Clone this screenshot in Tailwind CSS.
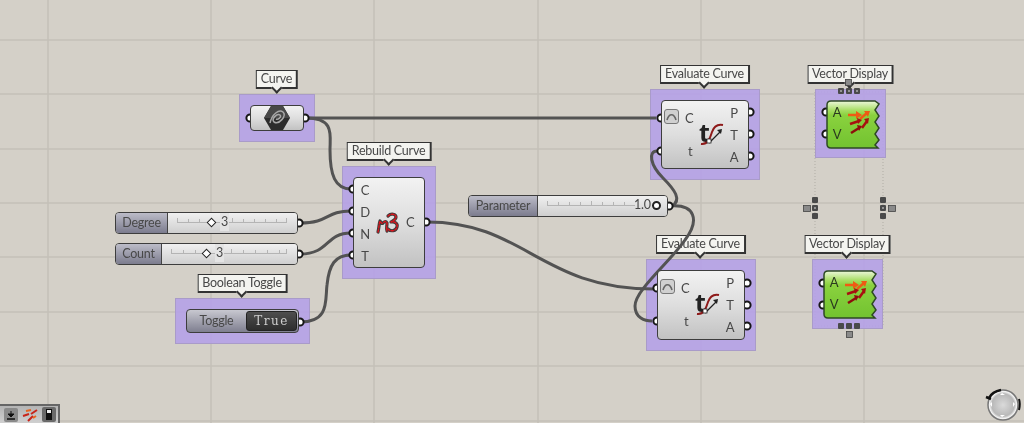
<!doctype html>
<html>

<head>
    <meta charset="UTF-8">
    <meta name="viewport" content="width=device-width, initial-scale=1.0">
    <script src="https://cdn.jsdelivr.net/npm/@tailwindcss/browser@4"></script>
</head>

<body>
    <div class="relative w-[1024px] h-[423px] overflow-hidden bg-[#d4d0c8] font-['Lato',sans-serif] text-[12.5px] tracking-[-0.25px] text-[#484848] blur-[0.5px]">

        <!-- canvas grid -->
        <svg class="absolute inset-0" width="1024" height="423" stroke="#c4c0b8" stroke-width="1.5">
            <defs>
                <linearGradient id="green" x1="0" y1="0" x2="0" y2="1">
                    <stop offset="0" stop-color="#eef7dc" />
                    <stop offset="0.2" stop-color="#a6dd62" />
                    <stop offset="0.3" stop-color="#8ad23e" />
                    <stop offset="1" stop-color="#72c230" />
                </linearGradient>
                <linearGradient id="wire-a" x1="0" y1="0" x2="1" y2="0">
                    <stop offset="0" stop-color="#9db48a" />
                    <stop offset="1" stop-color="#84c441" />
                </linearGradient>
            </defs>
            <path d="M48 0V423M211 0V423M374 0V423M538 0V423M701 0V423M864 0V423" />
            <path d="M0 40H1024M0 94H1024M0 149H1024M0 203H1024M0 257H1024M0 312H1024M0 366H1024M0 421H1024" />
            <rect x="815" y="92" width="68" height="234" fill="none" stroke="#b0ada5" stroke-width="1" stroke-dasharray="1 2" />
        </svg>

        <!-- Curve -->
        <div class="absolute left-[239px] top-[94px] w-[76px] h-[48px] p-[10px] bg-[#b5a1e7]/90 border border-[#a99bc9]">
            <div class="absolute bottom-full left-1/2 -translate-x-1/2 mb-[6px] h-[19px] px-[4px] flex items-center whitespace-nowrap bg-[#f4f4f0] border border-b-2 border-r-2 border-[#333]">Curve
                <span class="absolute left-1/2 -bottom-[5px] -ml-[4px] w-[8px] h-[8px] rotate-45 bg-[#f4f4f0] border-r-2 border-b-2 border-[#333]"></span>
            </div>
            <div class="relative z-20 h-full flex items-center justify-center rounded-[4px] border-[1.5px] border-[#3d3d3d] bg-gradient-to-b from-[#f2f2f2] via-[#dedede] to-[#c2c2c2]">
                <svg width="26" height="24" viewBox="0 0 26 24" fill="none">
                    <path d="M7 0H19L26 12L19 24H7L0 12Z" fill="#2c2c2c" />
                    <path d="M7 0H19L26 12H0Z" fill="#484848" />
                    <path d="M6 17C8 8 15 3 19 6C23 10 15 19 10 16C7 13 13 7 16 9C18 11 14 14 12 13" stroke="#a8a8a8" stroke-width="1.5" />
                </svg>
            </div>
        </div>

        <!-- Rebuild Curve -->
        <div class="absolute left-[342px] top-[166px] w-[94px] h-[113px] p-[10px] bg-[#b5a1e7]/90 border border-[#a99bc9]">
            <div class="absolute bottom-full left-1/2 -translate-x-1/2 mb-[6px] h-[19px] px-[4px] flex items-center whitespace-nowrap bg-[#f4f4f0] border border-b-2 border-r-2 border-[#333]">Rebuild Curve
                <span class="absolute left-1/2 -bottom-[5px] -ml-[4px] w-[8px] h-[8px] rotate-45 bg-[#f4f4f0] border-r-2 border-b-2 border-[#333]"></span>
            </div>
            <div class="relative z-20 h-full flex items-center rounded-[4px] border-[1.5px] border-[#3d3d3d] bg-gradient-to-b from-[#f2f2f2] via-[#dedede] to-[#c2c2c2]">
                <div class="w-[22px] flex flex-col items-center text-[13px]">
                    <span class="h-[22px] leading-[22px]">C</span>
                    <span class="h-[22px] leading-[22px]">D</span>
                    <span class="h-[22px] leading-[22px]">N</span>
                    <span class="h-[22px] leading-[22px]">T</span>
                </div>
                <svg class="shrink-0" width="24" height="24" viewBox="0 0 24 24" fill="none" stroke-linecap="round" stroke-linejoin="round">
                    <path d="M2 21C3 17 3 13 4 10C5 12 6 13 7 12C9 10 10 10 11 12C11 15 10 18 11 20" stroke="#3c3c3c" stroke-width="3.2" />
                    <path d="M12 5C15 2 20 3 20 6C20 9 16 10 15 11C19 10 22 13 21 16C20 20 15 21 12 18" stroke="#3c3c3c" stroke-width="3.2" />
                    <path d="M2 21C3 17 3 13 4 10C5 12 6 13 7 12C9 10 10 10 11 12C11 15 10 18 11 20M12 5C15 2 20 3 20 6C20 9 16 10 15 11C19 10 22 13 21 16C20 20 15 21 12 18" stroke="#e0141c" stroke-width="1.4" stroke-dasharray="2.4 1.6" />
                </svg>
                <span class="ml-[6px] text-[13px]">C</span>
            </div>
        </div>

        <!-- Degree slider -->
        <div class="absolute z-20 left-[115px] top-[212px] w-[183px] h-[22px] flex rounded-[4px] border-[1.5px] border-[#3d3d3d] overflow-hidden">
            <div class="w-[52px] flex items-center justify-center border-r-[1.5px] border-[#444] bg-gradient-to-b from-[#bcbcc8] to-[#7c7c8e]">Degree</div>
            <div class="relative flex-1 bg-gradient-to-b from-[#f0f0f0] to-[#cfcfcf]">
                <svg class="absolute left-[9px] top-[4px]" width="112" height="8" stroke="#b4b4b4" fill="none">
                    <path d="M0 5.5H110M0.5 1V6M11.5 2V6M22.5 2V6M33.5 2V6M55.5 1V6M66.5 2V6M77.5 2V6M88.5 2V6M99.5 2V6M109.5 1V6" />
                </svg>
                <span class="absolute left-[40px] top-[6px] w-[7px] h-[7px] rotate-45 bg-white border-[1.5px] border-[#222]"></span>
                <span class="absolute left-[52px] top-[0px] px-[1px] leading-[18px] bg-[#e4e4e4]">3</span>
            </div>
        </div>

        <!-- Count slider -->
        <div class="absolute z-20 left-[115px] top-[243px] w-[183px] h-[22px] flex rounded-[4px] border-[1.5px] border-[#3d3d3d] overflow-hidden">
            <div class="w-[46px] flex items-center justify-center border-r-[1.5px] border-[#444] bg-gradient-to-b from-[#bcbcc8] to-[#7c7c8e]">Count</div>
            <div class="relative flex-1 bg-gradient-to-b from-[#f0f0f0] to-[#cfcfcf]">
                <svg class="absolute left-[9px] top-[4px]" width="118" height="8" stroke="#b4b4b4" fill="none">
                    <path d="M0 5.5H116M0.5 1V6M12.5 2V6M24.5 2V6M36.5 2V6M60.5 1V6M72.5 2V6M84.5 2V6M96.5 2V6M108.5 2V6M115.5 1V6" />
                </svg>
                <span class="absolute left-[41px] top-[6px] w-[7px] h-[7px] rotate-45 bg-white border-[1.5px] border-[#222]"></span>
                <span class="absolute left-[53px] top-[0px] px-[1px] leading-[18px] bg-[#e4e4e4]">3</span>
            </div>
        </div>

        <!-- Boolean Toggle -->
        <div class="absolute left-[175px] top-[298px] w-[135px] h-[46px] p-[10px] bg-[#b5a1e7]/90 border border-[#a99bc9]">
            <div class="absolute bottom-full left-1/2 -translate-x-1/2 mb-[6px] h-[19px] px-[4px] flex items-center whitespace-nowrap bg-[#f4f4f0] border border-b-2 border-r-2 border-[#333]">Boolean Toggle
                <span class="absolute left-1/2 -bottom-[5px] -ml-[4px] w-[8px] h-[8px] rotate-45 bg-[#f4f4f0] border-r-2 border-b-2 border-[#333]"></span>
            </div>
            <div class="relative z-20 h-full flex items-center justify-between pr-[1px] rounded-[4px] border-[1.5px] border-[#3d3d3d] bg-gradient-to-b from-[#c8c8d0] to-[#7f7f90]">
                <span class="w-[59px] text-center">Toggle</span>
                <span class="w-[51px] h-[20px] flex items-center justify-center rounded-[3px] bg-gradient-to-b from-[#4e4e4e] to-[#2e2e2e] border border-[#222] font-['DejaVu_Serif',serif] text-[12px] tracking-[1.5px] text-[#cfcfcf]">True</span>
            </div>
        </div>

        <!-- Evaluate Curve, upper -->
        <div class="absolute left-[650px] top-[89px] w-[110px] h-[91px] p-[10px] bg-[#b5a1e7]/90 border border-[#a99bc9]">
            <div class="absolute bottom-full left-1/2 -translate-x-1/2 mb-[6px] h-[19px] px-[4px] flex items-center whitespace-nowrap bg-[#f4f4f0] border border-b-2 border-r-2 border-[#333]">Evaluate Curve
                <span class="absolute left-1/2 -bottom-[5px] -ml-[4px] w-[8px] h-[8px] rotate-45 bg-[#f4f4f0] border-r-2 border-b-2 border-[#333]"></span>
            </div>
            <div class="relative z-20 h-full flex items-center justify-between rounded-[4px] border-[1.5px] border-[#3d3d3d] bg-gradient-to-b from-[#f2f2f2] via-[#dedede] to-[#c2c2c2]">
                <span class="absolute left-[2px] top-[8px] w-[15px] h-[15px] flex items-center justify-center rounded-[3px] border-[1.5px] border-[#777] bg-[#d0d0d0]">
                    <svg width="11" height="9" viewBox="0 0 11 9" fill="none"><path d="M1 8C3 1 8 1 10 8" stroke="#666" stroke-width="1.6" /></svg>
                </span>
                <div class="w-[60px] pl-[23px] flex flex-col items-start text-[13px]">
                    <span class="h-[33px] leading-[33px]">C</span>
                    <span class="h-[33px] leading-[33px] pl-[3px]">t</span>
                </div>
                <span class="absolute left-[37px] top-[19px] h-[25px] leading-[25px] font-['Noto_Sans',sans-serif] font-bold text-[25px] text-[#222]">t</span>
                <svg class="absolute left-[37px] top-[21px]" width="28" height="24" viewBox="0 0 28 24" fill="none">
                    <path d="M2 22C9 23 11 16 13 10C15 4 19 2 24 3" stroke="#8e1a1a" stroke-width="2" />
                    <path d="M10 21L22 9" stroke="#222" stroke-width="1.2" />
                    <path d="M18 8L23 7L22 12Z" fill="#222" />
                    <rect x="8" y="17" width="4" height="4" fill="#fff" stroke="#222" stroke-width="0.8" />
                </svg>
                <div class="w-[22px] mr-[3px] flex flex-col items-center text-[13px]">
                    <span class="h-[22px] leading-[22px]">P</span>
                    <span class="h-[22px] leading-[22px]">T</span>
                    <span class="h-[22px] leading-[22px]">A</span>
                </div>
            </div>
        </div>

        <!-- Evaluate Curve, lower -->
        <div class="absolute left-[646px] top-[259px] w-[110px] h-[92px] p-[10px] bg-[#b5a1e7]/90 border border-[#a99bc9]">
            <div class="absolute bottom-full left-1/2 -translate-x-1/2 mb-[6px] h-[19px] px-[4px] flex items-center whitespace-nowrap bg-[#f4f4f0] border border-b-2 border-r-2 border-[#333]">Evaluate Curve
                <span class="absolute left-1/2 -bottom-[5px] -ml-[4px] w-[8px] h-[8px] rotate-45 bg-[#f4f4f0] border-r-2 border-b-2 border-[#333]"></span>
            </div>
            <div class="relative z-20 h-full flex items-center justify-between rounded-[4px] border-[1.5px] border-[#3d3d3d] bg-gradient-to-b from-[#f2f2f2] via-[#dedede] to-[#c2c2c2]">
                <span class="absolute left-[2px] top-[8px] w-[15px] h-[15px] flex items-center justify-center rounded-[3px] border-[1.5px] border-[#777] bg-[#d0d0d0]">
                    <svg width="11" height="9" viewBox="0 0 11 9" fill="none"><path d="M1 8C3 1 8 1 10 8" stroke="#666" stroke-width="1.6" /></svg>
                </span>
                <div class="w-[60px] pl-[23px] flex flex-col items-start text-[13px]">
                    <span class="h-[33px] leading-[33px]">C</span>
                    <span class="h-[33px] leading-[33px] pl-[3px]">t</span>
                </div>
                <span class="absolute left-[37px] top-[19px] h-[25px] leading-[25px] font-['Noto_Sans',sans-serif] font-bold text-[25px] text-[#222]">t</span>
                <svg class="absolute left-[37px] top-[21px]" width="28" height="24" viewBox="0 0 28 24" fill="none">
                    <path d="M2 22C9 23 11 16 13 10C15 4 19 2 24 3" stroke="#8e1a1a" stroke-width="2" />
                    <path d="M10 21L22 9" stroke="#222" stroke-width="1.2" />
                    <path d="M18 8L23 7L22 12Z" fill="#222" />
                    <rect x="8" y="17" width="4" height="4" fill="#fff" stroke="#222" stroke-width="0.8" />
                </svg>
                <div class="w-[22px] mr-[3px] flex flex-col items-center text-[13px]">
                    <span class="h-[22px] leading-[22px]">P</span>
                    <span class="h-[22px] leading-[22px]">T</span>
                    <span class="h-[22px] leading-[22px]">A</span>
                </div>
            </div>
        </div>

        <!-- Vector Display, upper -->
        <div class="absolute left-[815px] top-[89px] w-[71px] h-[69px] p-[10px] bg-[#b5a1e7]/90 border border-[#a99bc9]">
            <div class="absolute bottom-full left-1/2 -translate-x-1/2 mb-[6px] h-[19px] px-[4px] flex items-center whitespace-nowrap bg-[#f4f4f0] border border-b-2 border-r-2 border-[#333]">Vector Display
                <span class="absolute left-1/2 -bottom-[5px] -ml-[4px] w-[8px] h-[8px] rotate-45 bg-[#f4f4f0] border-r-2 border-b-2 border-[#333]"></span>
            </div>
            <div class="relative z-20 w-[55px] h-[49px]">
                <svg class="absolute inset-0" width="55" height="49" viewBox="0 0 55 49">
                    <path d="M5 1H49L53 4L49 10L53 16L49 22L53 28L49 34L53 40L49 45L52 48H5Q1 48 1 44V5Q1 1 5 1Z" fill="url(#green)" stroke="#2e4a24" stroke-width="1.5" />
                    <g fill="none" stroke-width="2.5">
                        <path d="M22 15H31" stroke="#ef5a14" /><path d="M34 19L41 13" stroke="#ef5a14" />
                        <path d="M24 24L33 21" stroke="#a81010" /><path d="M36 28L41 21" stroke="#a81010" />
                        <path d="M25 33L33 28" stroke="#8e0c0c" />
                    </g>
                    <g>
                        <path d="M30 11L36 15L30 19Z" fill="#ef5a14" /><path d="M38 11L44 11L42 17Z" fill="#ef5a14" />
                        <path d="M31 18L36 20L32 24Z" fill="#a81010" /><path d="M38 19L43 18L42 24Z" fill="#a81010" />
                        <path d="M31 25L36 26L33 31Z" fill="#8e0c0c" />
                    </g>
                </svg>
                <div class="relative w-[22px] pt-[1px] flex flex-col items-center text-[13px] text-[#2b3a1f]">
                    <span class="h-[22px] leading-[22px]">A</span>
                    <span class="h-[22px] leading-[22px]">V</span>
                </div>
            </div>
        </div>

        <!-- Vector Display, lower -->
        <div class="absolute left-[812px] top-[259px] w-[71px] h-[70px] p-[10px] bg-[#b5a1e7]/90 border border-[#a99bc9]">
            <div class="absolute bottom-full left-1/2 -translate-x-1/2 mb-[6px] h-[19px] px-[4px] flex items-center whitespace-nowrap bg-[#f4f4f0] border border-b-2 border-r-2 border-[#333]">Vector Display
                <span class="absolute left-1/2 -bottom-[5px] -ml-[4px] w-[8px] h-[8px] rotate-45 bg-[#f4f4f0] border-r-2 border-b-2 border-[#333]"></span>
            </div>
            <div class="relative z-20 w-[55px] h-[49px]">
                <svg class="absolute inset-0" width="55" height="49" viewBox="0 0 55 49">
                    <path d="M5 1H49L53 4L49 10L53 16L49 22L53 28L49 34L53 40L49 45L52 48H5Q1 48 1 44V5Q1 1 5 1Z" fill="url(#green)" stroke="#2e4a24" stroke-width="1.5" />
                    <g fill="none" stroke-width="2.5">
                        <path d="M22 15H31" stroke="#ef5a14" /><path d="M34 19L41 13" stroke="#ef5a14" />
                        <path d="M24 24L33 21" stroke="#a81010" /><path d="M36 28L41 21" stroke="#a81010" />
                        <path d="M25 33L33 28" stroke="#8e0c0c" />
                    </g>
                    <g>
                        <path d="M30 11L36 15L30 19Z" fill="#ef5a14" /><path d="M38 11L44 11L42 17Z" fill="#ef5a14" />
                        <path d="M31 18L36 20L32 24Z" fill="#a81010" /><path d="M38 19L43 18L42 24Z" fill="#a81010" />
                        <path d="M31 25L36 26L33 31Z" fill="#8e0c0c" />
                    </g>
                </svg>
                <div class="relative w-[22px] pt-[1px] flex flex-col items-center text-[13px] text-[#2b3a1f]">
                    <span class="h-[22px] leading-[22px]">A</span>
                    <span class="h-[22px] leading-[22px]">V</span>
                </div>
            </div>
        </div>

        <!-- Parameter slider -->
        <div class="absolute z-20 left-[468px] top-[195px] w-[200px] h-[22px] flex rounded-[4px] border-[1.5px] border-[#3d3d3d] overflow-hidden">
            <div class="w-[69px] flex items-center justify-center border-r-[1.5px] border-[#444] bg-gradient-to-b from-[#bcbcc8] to-[#7c7c8e]">Parameter</div>
            <div class="relative flex-1 bg-gradient-to-b from-[#f0f0f0] to-[#cfcfcf]">
                <svg class="absolute left-[9px] top-[4px]" width="90" height="8" stroke="#b4b4b4" fill="none">
                    <path d="M0 5.5H88M0.5 1V6M11.5 2V6M22.5 2V6M33.5 2V6M44.5 1V6M55.5 2V6M66.5 2V6M77.5 2V6" />
                </svg>
                <span class="absolute left-[96px] top-[0px] leading-[18px]">1.0</span>
                <span class="absolute left-[114px] top-[5px] w-[9px] h-[9px] rounded-full bg-white border-2 border-[#222]"></span>
            </div>
        </div>

        <!-- wires and grips -->
        <svg class="absolute z-10 inset-0 pointer-events-none" width="1024" height="423" fill="none">
            <g stroke="#535353" stroke-width="3">
                <path d="M306 118H656" />
                <path d="M306 118C335 118 330 135 330 150C330 175 335 189 351 189" />
                <path d="M300 223C330 223 325 211 351 211" />
                <path d="M300 254C330 254 325 233 351 233" />
                <path d="M300 322C330 322 325 300 327 285C329 265 335 255 351 255" />
                <path d="M427 222C525 222 540 289 654 289" />
                <path d="M670 206C695 204 700 220 685 240C670 262 635 290 635 306C635 318 645 321 652 321" />
                <path d="M657 151C648 151 650 165 663 178C675 190 682 200 672 206" />
            </g>
            <g stroke-width="3.5">
                <path d="M751 112H822" stroke="url(#wire-a)" />
                <path d="M751 134H822" stroke="url(#wire-a)" />
                <path d="M747 283H819" stroke="url(#wire-a)" />
                <path d="M747 305H819" stroke="url(#wire-a)" />
            </g>
            <g fill="#fff" stroke="#161616" stroke-width="2">
                <circle cx="250" cy="118" r="3.6" /><circle cx="305" cy="118" r="3.6" />
                <circle cx="353" cy="189" r="3.6" /><circle cx="353" cy="211" r="3.6" /><circle cx="353" cy="233" r="3.6" /><circle cx="353" cy="255" r="3.6" />
                <circle cx="426" cy="222" r="3.6" />
                <circle cx="299" cy="223" r="3.6" /><circle cx="299" cy="254" r="3.6" /><circle cx="300" cy="322" r="3.6" />
                <circle cx="669" cy="206" r="3.6" />
                <circle cx="661" cy="118" r="3.6" /><circle cx="661" cy="151" r="3.6" />
                <circle cx="750" cy="112" r="3.6" /><circle cx="750" cy="134" r="3.6" /><circle cx="750" cy="156" r="3.6" />
                <circle cx="657" cy="288" r="3.6" /><circle cx="657" cy="321" r="3.6" />
                <circle cx="747" cy="283" r="3.6" /><circle cx="747" cy="305" r="3.6" /><circle cx="747" cy="326" r="3.6" />
                <circle cx="826" cy="112" r="3.6" /><circle cx="826" cy="134" r="3.6" />
                <circle cx="823" cy="283" r="3.6" /><circle cx="823" cy="305" r="3.6" />
            </g>
        </svg>

        <!-- preview handles -->
        <svg class="absolute z-30 inset-0 pointer-events-none" width="1024" height="423">
            <g fill="#4a4a4a">
                <rect x="838" y="88" width="6" height="6" rx="1" /><rect x="846" y="88" width="6" height="6" rx="1" /><rect x="854" y="88" width="6" height="6" rx="1" />
                <rect x="838" y="323" width="6" height="6" rx="1" /><rect x="846" y="323" width="6" height="6" rx="1" /><rect x="854" y="323" width="6" height="6" rx="1" />
                <rect x="812" y="197" width="6" height="6" rx="1" /><rect x="812" y="205" width="6" height="6" rx="1" /><rect x="812" y="213" width="6" height="6" rx="1" />
                <rect x="880" y="197" width="6" height="6" rx="1" /><rect x="880" y="205" width="6" height="6" rx="1" /><rect x="880" y="213" width="6" height="6" rx="1" />
            </g>
            <g fill="#8a8a8a" stroke="#444" stroke-width="0.8">
                <rect x="845.5" y="79.5" width="6" height="6" /><rect x="846.5" y="331.5" width="6" height="6" />
                <rect x="803.5" y="205.5" width="7" height="6" /><rect x="888.5" y="205.5" width="7" height="6" />
            </g>
            <path d="M840 91H842M848 91H850M856 91H858M814 208H816M882 208H884" stroke="#ddd" stroke-width="1" />
        </svg>

        <!-- bottom left widget bar -->
        <div class="absolute z-30 left-0 bottom-0 w-[60px] h-[19px] flex items-center gap-[4px] pl-[4px] bg-gradient-to-b from-[#b4b4b4] to-[#d0d0d0] border-t-2 border-r-2 border-[#666]">
            <svg width="14" height="14" viewBox="0 0 14 14"><rect width="14" height="14" rx="2" fill="#8a8a8a" /><path d="M7 3V8M4 6L7 9L10 6Z" stroke="#111" fill="#111" /><path d="M3 11H11" stroke="#111" stroke-width="1.5" /></svg>
            <svg width="16" height="14" viewBox="0 0 16 14" fill="none" stroke-width="2"><path d="M1 8L7 6M6 13L11 8M9 6L15 2" stroke="#c8241a" /><path d="M4 3L9 2M11 10L14 8" stroke="#e8641e" /></svg>
            <svg width="14" height="15" viewBox="0 0 14 15"><rect width="14" height="15" rx="2" fill="#6a6a6a" /><rect x="4" y="2" width="6" height="11" fill="#111" /><rect x="5" y="3" width="4" height="3" fill="#eee" /></svg>
        </div>

        <!-- navigation compass -->
        <svg class="absolute z-30 left-[980px] top-[384px]" width="44" height="39" viewBox="0 0 44 39" fill="none">
            <defs>
                <radialGradient id="dial"><stop offset="0" stop-color="#dadada" /><stop offset="0.75" stop-color="#b8b8b8" /><stop offset="0.9" stop-color="#f2f2f2" /><stop offset="1" stop-color="#eeeeee" /></radialGradient>
            </defs>
            <circle cx="23" cy="21" r="15" fill="url(#dial)" stroke="#777" stroke-width="1.5" />
            <path d="M22 9L25 11H20ZM35 20L33 23V18ZM22 33L25 31H20ZM10 20L12 23V18Z" fill="#fff" />
            <path d="M6 13L11 15M9 14C11 10 15 7 21 6" stroke="#111" stroke-width="2.6" />
            <path d="M39 15C40 18 40 22 39 26" stroke="#111" stroke-width="2" />
        </svg>
    </div>
</body>

</html>
